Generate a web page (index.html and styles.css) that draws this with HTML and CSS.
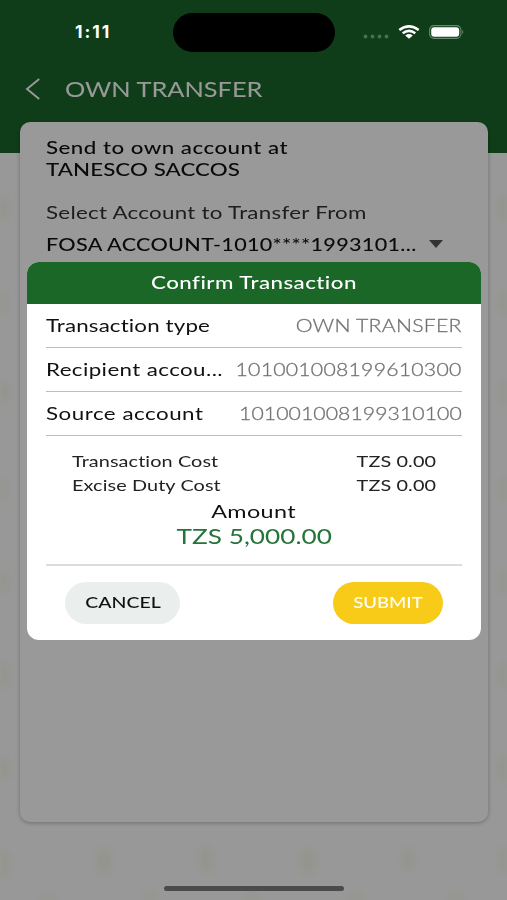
FILE: index.html
```html
<!DOCTYPE html>
<html lang="en">
<head>
<meta charset="utf-8">
<title>Own Transfer</title>
<link rel="stylesheet" href="styles.css">
</head>
<body>
<div class="screen">
  <header class="header">
    <svg class="back" viewBox="0 0 16 22" width="16" height="22"><path d="M14.200 1 2 11l12.200 10" fill="none" stroke="#fff" stroke-width="1.900"/></svg>
    <h1 class="t page-title">OWN TRANSFER</h1>
  </header>
  <svg class="watermark" viewBox="0 0 507 747" width="507" height="747">
    <g fill="#e3e2a8">
      <ellipse cx="2" cy="55" rx="8" ry="13"/><ellipse cx="1" cy="150" rx="7" ry="12"/><ellipse cx="2" cy="239" rx="9" ry="12"/><ellipse cx="1" cy="336" rx="7" ry="12"/><ellipse cx="2" cy="429" rx="8" ry="12"/><ellipse cx="3" cy="522" rx="8" ry="13"/><ellipse cx="3" cy="616" rx="8" ry="12"/><ellipse cx="3" cy="711" rx="8" ry="14"/>
      <ellipse cx="505" cy="55" rx="8" ry="13"/><ellipse cx="505" cy="150" rx="7" ry="12"/><ellipse cx="505" cy="239" rx="6" ry="12"/><ellipse cx="505" cy="336" rx="7" ry="12"/><ellipse cx="504" cy="429" rx="6" ry="12"/><ellipse cx="504" cy="522" rx="7" ry="13"/><ellipse cx="504" cy="616" rx="7" ry="14"/><ellipse cx="504" cy="707" rx="6" ry="13"/>
      <ellipse cx="104" cy="708" rx="9" ry="14"/><ellipse cx="206" cy="706" rx="8" ry="14"/><ellipse cx="308" cy="708" rx="9" ry="14"/><ellipse cx="408" cy="706" rx="7" ry="13"/>
      <ellipse cx="48" cy="745" rx="8" ry="6"/><ellipse cx="150" cy="745" rx="8" ry="6"/><ellipse cx="253" cy="745" rx="8" ry="6"/><ellipse cx="356" cy="745" rx="8" ry="6"/><ellipse cx="456" cy="745" rx="8" ry="6"/>
    </g>
  </svg>
  <main class="card">
    <p class="line strong"><span class="t send">Send to own account at</span></p>
    <p class="line strong"><span class="t bank">TANESCO SACCOS</span></p>
    <p class="line label"><span class="t pick">Select Account to Transfer From</span></p>
    <div class="select strong"><span class="t acct">FOSA ACCOUNT-1010****1993101...</span><i class="caret"></i></div>
  </main>
</div>

<div class="scrim"></div>

<div class="status">
  <span class="time">1:11</span>
  <span class="island"></span>
  <svg class="cell" viewBox="0 0 26 5" width="26" height="5"><g fill="#47704d"><circle cx="2.500" cy="2.500" r="1.900"/><circle cx="9.500" cy="2.500" r="1.900"/><circle cx="16.500" cy="2.500" r="1.900"/><circle cx="23.500" cy="2.500" r="1.900"/></g></svg>
  <svg class="wifi" viewBox="0 0 22 14" width="22" height="14"><g fill="none" stroke="#fff" stroke-width="2.500"><path d="M1.300 5.100Q11-2.300 20.700 5.100"/><path d="M4.700 8.300Q11 3.500 17.300 8.300"/></g><path d="M7.200 10.400Q11 7.600 14.800 10.400L11 13.700Z" fill="#fff"/></svg>
  <svg class="batt" viewBox="0 0 36 14" width="36" height="14"><rect x=".6" y=".6" width="31.300" height="12.800" rx="4.300" fill="none" stroke="#668a6b" stroke-width="1.100"/><rect x="2.200" y="2.200" width="28" height="9.600" rx="3" fill="#fff"/><path d="M33.300 4.700q2 2.300 0 4.600z" fill="#668a6b"/></svg>
</div>

<section class="dialog">
  <h2 class="dialog-head"><span class="t">Confirm Transaction</span></h2>
  <div class="dialog-body">
    <div class="row"><span class="t k type">Transaction type</span><span class="t v own">OWN TRANSFER</span></div>
    <div class="row"><span class="t k recipient">Recipient accou...</span><span class="t v num">101001008199610300</span></div>
    <div class="row"><span class="t k source">Source account</span><span class="t v num-b">101001008199310100</span></div>
    <div class="costs">
      <div class="cost"><span class="t k">Transaction Cost</span><span class="t v">TZS 0.00</span></div>
      <div class="cost"><span class="t k">Excise Duty Cost</span><span class="t v">TZS 0.00</span></div>
    </div>
    <div class="amount-label"><span class="t">Amount</span></div>
    <div class="amount"><span class="t">TZS 5,000.00</span></div>
    <div class="actions">
      <button class="btn cancel"><span class="t">CANCEL</span></button>
      <button class="btn submit"><span class="t">SUBMIT</span></button>
    </div>
  </div>
</section>
<div class="home"></div>
</body>
</html>
```
FILE: styles.css
```css
* { box-sizing: border-box; margin: 0; padding: 0; }
body {
  position: relative;
  width: 507px;
  height: 900px;
  overflow: hidden;
  font-family: Lato, "Open Sans", sans-serif;
  font-size: 18px;
  color: #111;
  font-variant-ligatures: none;
}
.screen { height: 900px; background: #fdfdfd; position: relative; }
.header {
  height: 153px;
  background: #1a672a;
  padding: 78px 0 0 25px;
  display: flex;
  align-items: flex-start;
  color: #fff;
}
/* Wide-set lettering */
.t {
  display: inline-block;
  white-space: nowrap;
  transform: scaleX(1.24);
  transform-origin: left center;
}
.page-title {
  font-size: 21.5px;
  font-weight: 400;
  line-height: 22px;
  margin-left: 24px;
  transform: scaleX(1.18);
}
.watermark { display: block; opacity: .16; filter: blur(3px); }
.card {
  position: absolute;
  top: 122px;
  left: 20px;
  width: 468px;
  height: 700px;
  border-radius: 10px;
  background: #fff;
  box-shadow: 0 1px 4px rgba(0, 0, 0, .28);
  padding: 14px 26px;
}
.line { height: 22px; line-height: 22px; }
.strong { font-weight: 500; }
.label { margin-top: 21px; color: #333; }
.send { letter-spacing: .38px; }
.bank { letter-spacing: .06px; }
.pick { letter-spacing: .23px; }
.acct { letter-spacing: .25px; transform: scaleX(1.2); }
.select {
  height: 22px;
  line-height: 22px;
  margin-top: 10px;
  display: flex;
  justify-content: space-between;
  align-items: center;
}
.caret {
  border: 7px solid transparent;
  border-top: 8px solid #555;
  border-bottom: 0;
  margin-right: 19px;
}
.scrim { position: absolute; inset: 0; background: rgba(0, 0, 0, .4); }
.status {
  position: absolute;
  top: 12px;
  left: 0;
  width: 507px;
  height: 40px;
  display: flex;
  align-items: center;
  color: #fff;
}
.time {
  font: 700 17.5px/20px Inter, sans-serif;
  width: 98px;
  margin-left: 75px;
  letter-spacing: 1.9px;
}
.island { width: 162px; height: 39px; border-radius: 20px; background: #000; }
.cell { margin: 8px 0 0 28px; }
.wifi { margin-left: 9px; }
.batt { margin-left: 9px; }
.dialog {
  position: absolute;
  top: 262px;
  left: 27px;
  width: 454px;
  height: 378px;
  border-radius: 12px;
  background: #fff;
  overflow: hidden;
}
.dialog-head {
  height: 42px;
  background: #1a6727;
  color: #fff;
  font-size: 18px;
  font-weight: 500;
  line-height: 41px;
  text-align: center;
  letter-spacing: .36px;
}
.dialog-head .t, .amount-label .t, .amount .t, .btn .t { transform-origin: center; }
.dialog-body { padding: 0 19px; }
.row {
  height: 44px;
  display: flex;
  justify-content: space-between;
  line-height: 43px;
  border-bottom: 1px solid #bdbdbd;
}
.v { transform-origin: right center; }
.row .v {
  color: #6e6e6e;
  font-weight: 300;
  -webkit-text-stroke: .3px #777;
  transform: scaleX(1.18);
}
.type { letter-spacing: .12px; }
.own { letter-spacing: .2px; }
.recipient { letter-spacing: .33px; }
.num { letter-spacing: .2px; }
.num-b { letter-spacing: .05px; }
.source { letter-spacing: .42px; }
.costs { padding: 13px 26px 0; }
.cost {
  height: 24px;
  display: flex;
  justify-content: space-between;
  font-size: 16px;
  line-height: 24px;
  letter-spacing: .08px;
  color: #222;
}
.amount-label { height: 27px; line-height: 28px; text-align: center; letter-spacing: .26px; }
.amount-label .t { transform: scaleX(1.3); }
.amount {
  height: 42px;
  line-height: 23px;
  font-size: 22px;
  text-align: center;
  color: #25743a;
  border-bottom: 2px solid #dcdcdc;
}
.amount .t { transform: scaleX(1.19); }
.actions { display: flex; justify-content: space-between; padding: 16px 19px 0; }
.btn {
  height: 42px;
  border: 0;
  border-radius: 21px;
  font: 500 16px/40px Lato, sans-serif;
  padding-bottom: 2px;
}
.cancel { width: 115px; background: #eaeeed; color: #111; }
.submit { width: 110px; background: #f7cb17; color: #fff; }
.cancel .t { transform: scaleX(1.22); }
.submit .t { transform: scaleX(1.16); }
.home {
  position: absolute;
  left: 164px;
  top: 886px;
  width: 180px;
  height: 5px;
  border-radius: 3px;
  background: #4b4b4b;
}
```
